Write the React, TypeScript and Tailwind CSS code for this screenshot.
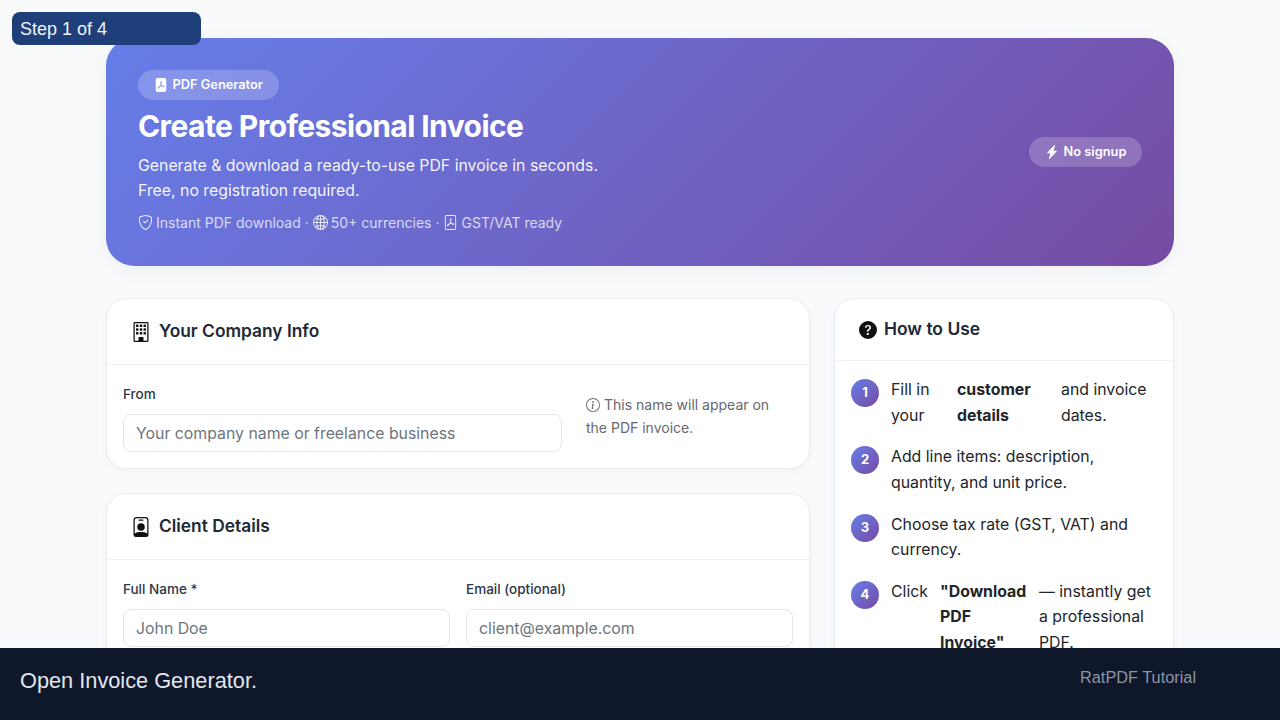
import React from 'react';
import {
  BsFilePdfFill,
  BsShieldCheck,
  BsGlobe2,
  BsFilePdf,
  BsLightningChargeFill,
  BsBuilding,
  BsPersonBadge,
  BsQuestionCircleFill,
  BsInfoCircle,
} from 'react-icons/bs';

const inter = { fontFamily: 'Inter, sans-serif' };

const Field = ({ label, placeholder, className }: { label: string; placeholder: string; className: string }) => (
  <div className={className}>
    <label className="block h-[20px] text-[13.5px] leading-[20px] font-medium text-[#2b3648] mb-[10px]">{label}</label>
    <input
      readOnly
      placeholder={placeholder}
      className="block w-full h-[38px] rounded-[8px] border border-[#e2e5ea] bg-white px-[12px] text-[15.84px] text-[#212529] placeholder:text-[#6c757d] outline-none"
    />
  </div>
);

const Card = ({ icon, title, children }: { icon: React.ReactNode; title: string; children: React.ReactNode }) => (
  <div className="rounded-[20px] border border-[#e8edf3] bg-white shadow-[0_2px_6px_rgba(15,23,42,0.04)]">
    <div className="flex h-[66px] items-center gap-[8px] border-b border-[#eef1f5] px-[24px] text-[17.35px] font-semibold text-[#212835]">
      {icon}
      <span>{title}</span>
    </div>
    {children}
  </div>
);

const Step = ({ n, children }: { n: number; children: React.ReactNode }) => (
  <li className="flex gap-[12px] text-[15.84px] leading-[25.6px] text-[#212529]">
    <span className="mt-[2px] flex h-[28px] w-[28px] shrink-0 items-center justify-center rounded-full bg-[linear-gradient(135deg,#667eea,#764ba2)] text-[13px] font-bold text-white">
      {n}
    </span>
    {children}
  </li>
);

export default function App() {
  return (
    <div className="relative h-[720px] overflow-hidden bg-[#f8fafc]" style={inter}>
      <div className="mx-auto w-[1068px] pt-[38px]">
        <div className="flex h-[228px] items-center justify-between rounded-[28px] bg-[linear-gradient(135deg,#667eea,#764ba2)] px-[32px] text-white shadow-[0_4px_20px_rgba(15,23,42,0.05)]">
          <div>
            <div className="inline-flex h-[30px] items-center gap-[4.5px] rounded-full bg-white/20 px-[16px] text-[12.8px] font-semibold">
              <BsFilePdfFill className="-mt-[1px] h-[14px] w-[14px]" />
              PDF Generator
            </div>
            <h1 className="mt-[8px] text-[30px] leading-[36px] font-bold tracking-[-0.58px]">Create Professional Invoice</h1>
            <p className="mt-[9px] text-[15.84px] leading-[25px] text-white/95">
              Generate &amp; download a ready-to-use PDF invoice in seconds.
              <br />
              Free, no registration required.
            </p>
            <div className="mt-[9px] flex items-center gap-[3px] text-[14px] leading-[22px] text-white/75">
              <BsShieldCheck className="-mt-[1px] h-[15px] w-[15px] text-white/85" />
              <span>Instant PDF download ·</span>
              <BsGlobe2 className="-mt-[1px] ml-[1px] h-[15px] w-[15px] text-white/85" />
              <span>50+ currencies ·</span>
              <BsFilePdf className="-mt-[1px] ml-[1px] h-[15px] w-[15px] text-white/85" />
              <span>GST/VAT ready</span>
            </div>
          </div>
          <div className="inline-flex h-[30px] w-[113px] items-center justify-center gap-[5px] rounded-full bg-white/20 text-[12.8px] font-semibold">
            <BsLightningChargeFill className="h-[14px] w-[14px]" />
            No signup
          </div>
        </div>

        <div className="mt-[32px] flex items-start gap-[24px]">
          <div className="flex w-[704px] flex-col gap-[24px]">
            <Card icon={<BsBuilding className="h-[20px] w-[20px] text-[#111111]" />} title="Your Company Info">
              <div className="flex items-start gap-[24px] p-[16px] pt-[19px]">
                <Field label="From" placeholder="Your company name or freelance business" className="w-[439px]" />
                <p className="w-[207px] pt-[9px] text-[14px] leading-[23px] text-[#65696f]">
                  <BsInfoCircle className="mr-[4px] inline h-[14px] w-[14px] align-[-2px]" />
                  This name will appear on the PDF invoice.
                </p>
              </div>
            </Card>
            <Card icon={<BsPersonBadge className="h-[20px] w-[20px] text-[#111111]" />} title="Client Details">
              <div className="flex gap-[16px] p-[16px] pt-[19px]">
                <Field label="Full Name *" placeholder="John Doe" className="w-[327px]" />
                <Field label="Email (optional)" placeholder="client@example.com" className="w-[327px]" />
              </div>
            </Card>
          </div>

          <div className="w-[340px] rounded-[20px] border border-[#e8edf3] bg-white shadow-[0_2px_6px_rgba(15,23,42,0.04)]">
            <div className="flex h-[62px] items-center gap-[7px] border-b border-[#eef1f5] px-[24px] text-[17.45px] font-semibold text-[#212835]">
              <BsQuestionCircleFill className="h-[18px] w-[18px] text-[#111111]" />
              How to Use
            </div>
            <ol className="flex flex-col gap-[16.1px] px-[16px] pb-[24px] pt-[16px]">
              <Step n={1}>
                <span className="w-[54px] shrink-0">Fill in your</span>
                <strong className="w-[92px] shrink-0 font-bold">customer details</strong>
                <span>and invoice dates.</span>
              </Step>
              <Step n={2}>
                <span>Add line items: description, quantity, and unit price.</span>
              </Step>
              <Step n={3}>
                <span>Choose tax rate (GST, VAT) and currency.</span>
              </Step>
              <Step n={4}>
                <span className="w-[37px] shrink-0">Click</span>
                <strong className="w-[87px] shrink-0 font-bold">"Download PDF Invoice"</strong>
                <span>— instantly get a professional PDF.</span>
              </Step>
            </ol>
          </div>
        </div>
      </div>

      <div
        className="absolute left-[12px] top-[12px] h-[33px] w-[189px] rounded-[8px] bg-[#1e3f7a] px-[8px] text-[18px] leading-[35px] text-[#f1f5f9]"
        style={{ fontFamily: '"Liberation Sans", Arial, sans-serif' }}
      >
        Step 1 of 4
      </div>

      <div
        className="absolute bottom-0 left-0 right-0 h-[72px] bg-[#0f172a]"
        style={{ fontFamily: '"Liberation Sans", Arial, sans-serif' }}
      >
        <span className="absolute left-[20px] top-[19px] text-[21.76px] leading-[28px] text-[#e2e8f0]">Open Invoice Generator.</span>
        <span className="absolute left-[1080px] top-[19px] text-[16.32px] leading-[20px] text-[#8c96a6]">RatPDF Tutorial</span>
      </div>
    </div>
  );
}
